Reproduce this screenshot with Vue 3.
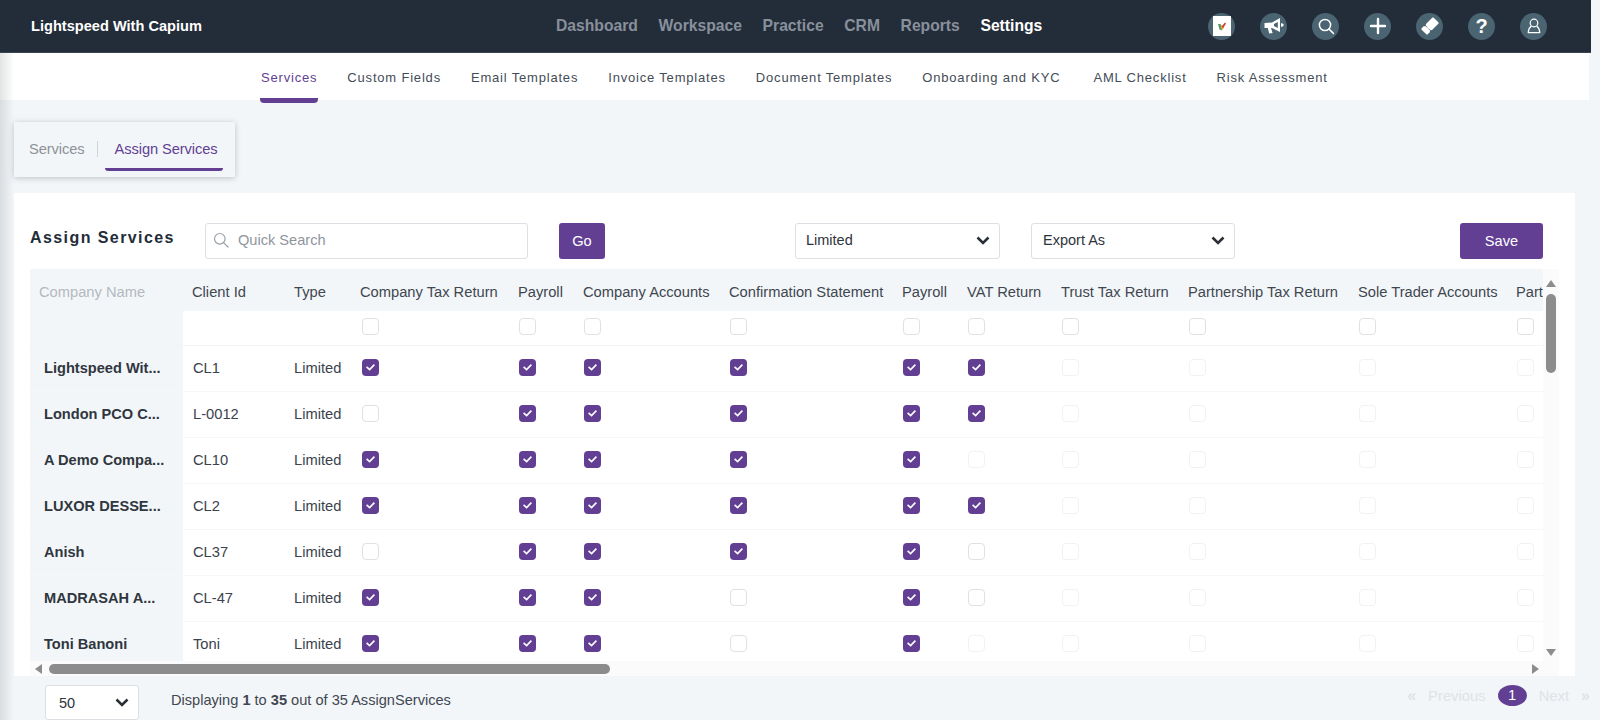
<script setup>
const nav = ['Dashboard', 'Workspace', 'Practice', 'CRM', 'Reports', 'Settings']
const subnav = ['Services', 'Custom Fields', 'Email Templates', 'Invoice Templates', 'Document Templates', 'Onboarding and KYC', 'AML Checklist', 'Risk Assessment']
const services = ['Company Tax Return', 'Payroll', 'Company Accounts', 'Confirmation Statement', 'Payroll', 'VAT Return', 'Trust Tax Return', 'Partnership Tax Return', 'Sole Trader Accounts', 'Part']
// c = checked, u = unchecked, d = disabled
const rows = [
  { name: 'Lightspeed Wit...', id: 'CL1', marks: 'ccccccdddd' },
  { name: 'London PCO C...', id: 'L-0012', marks: 'ucccccdddd' },
  { name: 'A Demo Compa...', id: 'CL10', marks: 'cccccddddd' },
  { name: 'LUXOR DESSE...', id: 'CL2', marks: 'ccccccdddd' },
  { name: 'Anish', id: 'CL37', marks: 'uccccudddd' },
  { name: 'MADRASAH A...', id: 'CL-47', marks: 'cccucudddd' },
  { name: 'Toni Banoni', id: 'Toni', marks: 'cccucddddd' }
]
</script>

<template>
  <div class="page">
    <div class="edge"></div>
    <header class="topbar">
      <div class="brand">Lightspeed With Capium</div>
      <nav class="mainnav">
        <a v-for="n in nav" :key="n" :class="{ on: n === 'Settings' }">{{ n }}</a>
      </nav>
      <div class="icons">
        <span class="ic">
          <span class="logo">
            <svg width="10" height="10" viewBox="0 0 10 10">
              <path d="M1 3 L3.5 3 L5 6 L5 9.5 L2.5 8.5 Z" fill="#4f9a6b" />
              <path d="M3.5 4 L7 5 L6 8.5 L4.5 8.5 Z" fill="#e8a13a" />
              <path d="M5 5 L8 1.5 L9 2.5 L6 7.5 Z" fill="#d9362f" />
            </svg>
          </span>
        </span>
        <span class="ic">
          <svg width="22" height="20" viewBox="0 0 22 20">
            <path d="M1.5 7 L9 6.5 L17 2 L17 16 L9 12 L8 12 L9.6 17 L6.2 17.6 L4.8 12 L1.5 12 Z" fill="#fff" />
            <path d="M14.8 6 L14.8 12 L11 10 L11 8 Z" fill="#4b6472" />
            <path d="M18 7 L20.5 8 L20.5 10 L18 11 Z" fill="#fff" />
          </svg>
        </span>
        <span class="ic">
          <svg width="18" height="18" viewBox="0 0 18 18" fill="none" stroke="#fff" stroke-width="1.5">
            <circle cx="8" cy="8" r="5.6" />
            <path d="M12 12 L16.4 16.4" stroke-linecap="round" />
          </svg>
        </span>
        <span class="ic">
          <svg width="18" height="18" viewBox="0 0 18 18" fill="none" stroke="#fff" stroke-width="2.4" stroke-linecap="round">
            <path d="M9 2 V16 M2 9 H16" />
          </svg>
        </span>
        <span class="ic">
          <svg width="20" height="20" viewBox="-10 -10 20 20">
            <g transform="rotate(-45)">
              <rect x="-8.5" y="-4.3" width="17" height="8.6" rx="1" fill="#fff" />
              <circle cx="-3" cy="-4.3" r="1.2" fill="#4b6472" />
              <circle cx="-3" cy="4.3" r="1.2" fill="#4b6472" />
              <path d="M-3 -3 V3" stroke="#4b6472" stroke-width="0.9" stroke-dasharray="1.2 0.9" />
            </g>
          </svg>
        </span>
        <span class="ic qm">?</span>
        <span class="ic">
          <svg width="18" height="18" viewBox="0 0 18 18" fill="none" stroke="#fff" stroke-width="1.2">
            <circle cx="9" cy="6" r="3.8" />
            <path d="M6.4 9 C4.4 10.4 3.4 12.4 3.2 15.6 H14.8 C14.6 12.4 13.6 10.4 11.6 9" stroke-linejoin="round" />
          </svg>
        </span>
      </div>
    </header>

    <nav class="subnav">
      <a v-for="(s, i) in subnav" :key="s" :class="{ on: i === 0, wide: s === 'AML Checklist' }">{{ s }}</a>
    </nav>

    <div class="tabs">
      <span class="tab">Services</span>
      <span class="sep"></span>
      <span class="tab active">Assign Services</span>
    </div>

    <section class="card">
      <div class="toolbar">
        <h2 class="title">Assign Services</h2>
        <label class="search">
          <svg width="16" height="16" viewBox="0 0 16 16" fill="none" stroke="#9aa1a8" stroke-width="1.2">
            <circle cx="6.8" cy="6.8" r="5.3" />
            <path d="M10.6 10.6 L15 15" stroke-linecap="round" />
          </svg>
          <input placeholder="Quick Search" />
        </label>
        <button class="btn go">Go</button>
        <div class="select limited">
          <span>Limited</span>
          <svg class="chev" width="14" height="9" viewBox="0 0 14 9" fill="none" stroke="#2b2f36" stroke-width="2.6"><path d="M1.5 1.5 L7 7 L12.5 1.5" /></svg>
        </div>
        <div class="select export">
          <span>Export As</span>
          <svg class="chev" width="14" height="9" viewBox="0 0 14 9" fill="none" stroke="#2b2f36" stroke-width="2.6"><path d="M1.5 1.5 L7 7 L12.5 1.5" /></svg>
        </div>
        <button class="btn save">Save</button>
      </div>

      <div class="tablewrap">
        <div class="table">
          <div class="row head">
            <div class="cell name dim">Company Name</div>
            <div class="cell">Client Id</div>
            <div class="cell">Type</div>
            <div v-for="(s, i) in services" :key="i" class="cell">{{ s }}</div>
          </div>
          <div class="row filter">
            <div class="cell name"></div>
            <div class="cell"></div>
            <div class="cell"></div>
            <div v-for="(s, i) in services" :key="i" class="cell"><span class="box u"></span></div>
          </div>
          <div v-for="r in rows" :key="r.id" class="row body">
            <div class="cell name strong">{{ r.name }}</div>
            <div class="cell">{{ r.id }}</div>
            <div class="cell">Limited</div>
            <div v-for="(m, i) in r.marks.split('')" :key="i" class="cell">
              <span class="box" :class="m">
                <svg v-if="m === 'c'" width="17" height="16" viewBox="0 0 17 16" fill="none" stroke="#fff" stroke-width="1.6"><path d="M4.6 7.8 L7.6 10.6 L12.4 5.6" /></svg>
              </span>
            </div>
          </div>
        </div>
        <div class="vbar">
          <span class="arrow up"></span>
          <span class="vthumb"></span>
          <span class="arrow down"></span>
        </div>
      </div>
      <div class="hbar">
        <span class="arrow left"></span>
        <span class="hthumb"></span>
        <span class="arrow right"></span>
      </div>
    </section>

    <footer class="footer">
      <div class="select size">
        <span>50</span>
        <svg class="chev" width="14" height="9" viewBox="0 0 14 9" fill="none" stroke="#2b2f36" stroke-width="2.6"><path d="M1.5 1.5 L7 7 L12.5 1.5" /></svg>
      </div>
      <div class="count">Displaying <b>1</b> to <b>35</b> out of 35 AssignServices</div>
      <div class="pager">
        <span class="aq">«</span>
        <span>Previous</span>
        <span class="pill">1</span>
        <span>Next</span>
        <span class="aq">»</span>
      </div>
    </footer>
  </div>
</template>

<style scoped>
.page {
  position: relative;
  width: 1591px;
  height: 720px;
  overflow: hidden;
  font-family: "Liberation Sans", Arial, sans-serif;
  color: #3a424c;
}
.edge {
  position: absolute;
  left: 0;
  top: 53px;
  bottom: 0;
  width: 14px;
  background: linear-gradient(90deg, rgba(120, 130, 135, 0.22), rgba(120, 130, 135, 0));
  pointer-events: none;
  z-index: 3;
}
.topbar {
  height: 53px;
  background: #232c39;
  display: flex;
  align-items: center;
  border-bottom: 1px solid #3a4450;
  box-sizing: border-box;
}
.brand {
  width: 525px;
  padding-left: 31px;
  color: #fff;
  font-weight: 700;
  font-size: 14.6px;
}
.mainnav {
  display: flex;
  gap: 20.6px;
  font-size: 15.7px;
  font-weight: 700;
  color: #87909b;
}
.mainnav .on { color: #fff; }
.icons {
  margin-left: auto;
  padding-right: 44px;
  display: flex;
  gap: 25px;
}
.ic {
  width: 27px;
  height: 27px;
  border-radius: 50%;
  background: #4b6472;
  display: flex;
  align-items: center;
  justify-content: center;
}
.logo {
  width: 18px;
  height: 20px;
  background: #fff;
  display: flex;
  align-items: center;
  justify-content: center;
}
.qm {
  color: #fff;
  font-weight: 700;
  font-size: 20px;
}
.subnav {
  height: 47px;
  width: 1589px;
  background: #fff;
  display: flex;
  gap: 30px;
  padding: 2px 0 0 261px;
  box-sizing: border-box;
  font-size: 13px;
  letter-spacing: 0.81px;
  color: #444c56;
  align-items: center;
}
.subnav a { position: relative; }
.subnav .wide { margin-left: 3px; }
.subnav .on { color: #623f93; }
.subnav .on::after {
  content: "";
  position: absolute;
  left: -1px;
  right: -1px;
  top: 28px;
  height: 5px;
  background: #623f93;
  border-radius: 0 0 4px 4px;
}
.tabs {
  margin: 22px 0 0 14px;
  width: 221px;
  height: 55px;
  background: #f3f6f9;
  box-shadow: 0 1px 6px rgba(0, 0, 0, 0.22);
  display: flex;
  align-items: center;
  font-size: 14.7px;
  box-sizing: border-box;
  padding: 0 0 2px 15px;
}
.tab { color: #8d9298; letter-spacing: -0.1px; }
.sep {
  width: 1px;
  height: 16px;
  background: #cfd3d7;
  margin: 0 17px 0 12px;
}
.tab.active {
  color: #623f93;
  position: relative;
}
.tab.active::after {
  content: "";
  position: absolute;
  left: -10px;
  right: -5px;
  top: 27px;
  height: 3px;
  background: #623f93;
  border-radius: 0 0 3px 3px;
}
.card {
  margin: 16px 0 0 14px;
  width: 1561px;
  height: 483px;
  background: #fff;
  padding: 30px 0 0 16px;
  box-sizing: border-box;
}
.toolbar {
  display: flex;
  align-items: stretch;
  height: 36px;
  width: 1513px;
  margin-bottom: 10px;
}
.title {
  width: 175px;
  margin: 0;
  font-size: 16px;
  font-weight: 700;
  letter-spacing: 1.42px;
  color: #232c39;
  line-height: 29px;
}
.search {
  width: 323px;
  box-sizing: border-box;
  border: 1px solid #dcdfe3;
  border-radius: 3px;
  display: flex;
  align-items: center;
  padding: 0 0 2px 7px;
  gap: 7px;
}
.search input {
  border: 0;
  outline: 0;
  flex: 1;
  min-width: 0;
  font: 14.6px "Liberation Sans", Arial, sans-serif;
  color: #333;
  background: transparent;
}
.search input::placeholder { color: #8f959b; opacity: 1; }
.btn {
  border: 0;
  border-radius: 3px;
  background: #623f93;
  color: #fff;
  font: 14.6px "Liberation Sans", Arial, sans-serif;
  padding: 0 0 1px;
}
.go { width: 46px; margin-left: 31px; }
.save { width: 83px; margin-left: auto; }
.select {
  box-sizing: border-box;
  border: 1px solid #dcdfe3;
  border-radius: 3px;
  background: #fff;
  display: flex;
  align-items: center;
  justify-content: space-between;
  font-size: 14.5px;
  color: #2e343b;
}
.limited { width: 205px; margin-left: 190px; padding: 0 9px 2px 10px; }
.export { width: 204px; margin-left: 31px; padding: 0 9px 2px 11px; }
.tablewrap {
  display: flex;
  width: 1529px;
  height: 392px;
}
.table {
  width: 1513px;
  overflow: hidden;
  font-size: 14.7px;
}
.row {
  display: grid;
  grid-template-columns: 153px 102px 66px 158px 65px 146px 173px 65px 94px 127px 170px 158px 60px;
  width: 1577px;
}
.cell {
  padding-left: 9px;
  display: flex;
  align-items: center;
  white-space: nowrap;
  overflow: hidden;
}
.head {
  height: 42px;
  padding-top: 3px;
  box-sizing: border-box;
  background: #f3f6f9;
  color: #3f4750;
}
.filter { height: 35px; border-bottom: 1px solid #f4f4f5; box-sizing: border-box; }
.filter .box { margin-top: -4px; }
.body { height: 46px; border-bottom: 1px solid #f7f7f8; box-sizing: border-box; }
.body .cell { padding-bottom: 2px; }
.body .cell:nth-child(2) { padding-left: 10px; }
.name { background: #f3f6f9; padding-left: 14px; }
.head .dim { color: #b3b9c0; padding-left: 9px; }
.strong { font-weight: 700; color: #30363e; font-size: 14.6px; }
.box {
  width: 17px;
  height: 17px;
  box-sizing: border-box;
  border-radius: 4px;
  margin-left: 1px;
  display: block;
}
.cell:nth-child(4) .box { margin-left: 2px; }
.box.u { border: 1px solid #dfe1e4; }
.box.d { border: 1px solid #f1f2f3; }
.box.c { background: #623f93; }
.box svg { display: block; }
.vbar {
  width: 16px;
  background: #fbfbfb;
  display: flex;
  flex-direction: column;
  align-items: center;
}
.vthumb {
  width: 10px;
  height: 79px;
  margin-top: 7px;
  background: #8c8c8c;
  border-radius: 5px;
}
.arrow { width: 0; height: 0; display: block; }
.arrow.up {
  margin-top: 11px;
  border-left: 5.5px solid transparent;
  border-right: 5.5px solid transparent;
  border-bottom: 7px solid #8c8c8c;
}
.arrow.down {
  margin-top: auto;
  margin-bottom: 5px;
  border-left: 5.5px solid transparent;
  border-right: 5.5px solid transparent;
  border-top: 7px solid #8c8c8c;
}
.hbar {
  width: 1529px;
  height: 15px;
  background: #fbfbfb;
  display: flex;
  align-items: center;
  padding-left: 5px;
  box-sizing: border-box;
}
.hthumb {
  width: 561px;
  height: 10px;
  margin-left: 7px;
  background: #8c8c8c;
  border-radius: 5px;
}
.arrow.left {
  border-top: 5.5px solid transparent;
  border-bottom: 5.5px solid transparent;
  border-right: 7px solid #8c8c8c;
}
.arrow.right {
  margin-left: auto;
  margin-right: 20px;
  border-top: 5.5px solid transparent;
  border-bottom: 5.5px solid transparent;
  border-left: 7px solid #8c8c8c;
}
.footer {
  display: flex;
  align-items: flex-start;
  padding: 9px 0 0 45px;
  font-size: 14.6px;
}
.size { width: 94px; height: 35px; padding: 0 9px 0 13px; }
.count { margin-left: 32px; line-height: 30px; color: #3f4750; }
.pager {
  margin-left: auto;
  padding-right: 1px;
  display: flex;
  align-items: center;
  height: 21px;
  color: #dfe2e6;
  font-size: 14.8px;
  gap: 12px;
}
.aq { font-size: 16px; font-weight: 700; }
.pill {
  width: 29px;
  height: 21px;
  border-radius: 50%;
  background: #623f93;
  color: #fff;
  text-align: center;
  line-height: 20px;
}
</style>

<style>
html, body { margin: 0; background: #f3f6f9; overflow: hidden; }
</style>
